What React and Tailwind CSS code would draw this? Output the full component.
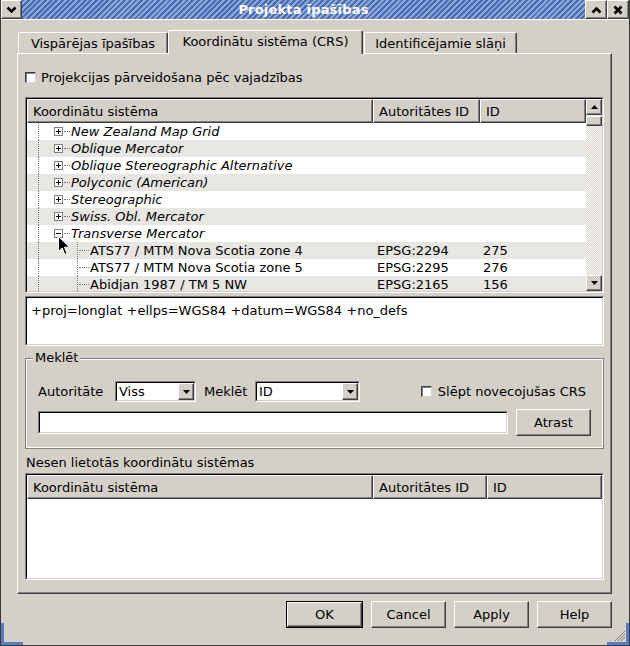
import React from "react";

const raised =
  "border border-t-white border-l-white border-r-[#404040] border-b-[#404040] shadow-[inset_-1px_-1px_0_#808080]";

function Sunken({ className = "", inner = "", children }) {
  return (
    <div className={`border border-t-[#808080] border-l-[#808080] border-r-white border-b-white ${className}`}>
      <div className={`h-full border border-t-black border-l-black border-r-[#d4d0c8] border-b-[#d4d0c8] ${inner}`}>
        {children}
      </div>
    </div>
  );
}

function CheckBox() {
  return (
    <span className="block w-[11px] h-[11px] shrink-0 bg-white border border-t-[#404040] border-l-[#404040] border-r-[#d4d0c8] border-b-[#d4d0c8] shadow-[inset_1px_1px_0_#808080]" />
  );
}

function HeaderCell({ w, children, last }) {
  return (
    <div
      className={`h-full flex items-center pl-[5px] shrink-0 ${raised} ${last ? "flex-1" : ""}`}
      style={w ? { width: w } : undefined}
    >
      {children}
    </div>
  );
}

function Expander({ open }) {
  return (
    <svg width="9" height="9" viewBox="0 0 9 9" className="shrink-0">
      <rect x="0.5" y="0.5" width="8" height="8" fill="white" stroke="#808080" />
      <path d="M2 4.5h5" stroke="#000" />
      {!open && <path d="M4.5 2v5" stroke="#000" />}
    </svg>
  );
}

function Arrow({ dir }) {
  return (
    <svg width="7" height="4" viewBox="0 0 7 4">
      {dir === "up" ? <path d="M0 4L3.5 0L7 4z" fill="#000" /> : <path d="M0 0L3.5 4L7 0z" fill="#000" />}
    </svg>
  );
}

function Combo({ w, value }) {
  return (
    <Sunken className="h-[21px] shrink-0" inner="flex bg-white">
      <div className="flex-1 flex items-center pl-[2px]" style={{ width: w - 20 }}>
        {value}
      </div>
      <div className={`w-[16px] h-full flex items-center justify-center bg-[#d4d0c8] ${raised}`}>
        <Arrow dir="down" />
      </div>
    </Sunken>
  );
}

function Button({ children, w = "w-[75px]" }) {
  return (
    <div className={`${w} h-[27px] flex items-center justify-center ${raised}`}>{children}</div>
  );
}

const groups = [
  "New Zealand Map Grid",
  "Oblique Mercator",
  "Oblique Stereographic Alternative",
  "Polyconic (American)",
  "Stereographic",
  "Swiss. Obl. Mercator",
];

const children = [
  ["ATS77 / MTM Nova Scotia zone 4", "EPSG:2294", "275"],
  ["ATS77 / MTM Nova Scotia zone 5", "EPSG:2295", "276"],
  ["Abidjan 1987 / TM 5 NW", "EPSG:2165", "156"],
];

const dotV = "border-l border-dotted border-[#7a7a7a]";
const dotH = "border-t border-dotted border-[#7a7a7a]";

function GroupRow({ name, open, shade }) {
  return (
    <div className={`flex h-[17px] shrink-0 ${shade ? "bg-[#e8e6e2]" : "bg-white"}`}>
      <div className="w-[346px] flex items-center shrink-0 h-full">
        <div className="w-[11px] shrink-0" />
        <div className={`w-[16px] h-full shrink-0 ${dotV}`} />
        <Expander open={open} />
        <div className={`w-[6px] ml-[1px] shrink-0 ${dotH}`} />
        <span className="ml-[1px] italic whitespace-nowrap">{name}</span>
      </div>
    </div>
  );
}

function ChildRow({ row, shade }) {
  return (
    <div className={`flex h-[17px] shrink-0 ${shade ? "bg-[#e8e6e2]" : "bg-white"}`}>
      <div className="w-[346px] flex items-center shrink-0 h-full">
        <div className="w-[11px] shrink-0" />
        <div className={`w-[39px] h-full shrink-0 ${dotV}`} />
        <div className={`w-[12px] h-full shrink-0 flex items-center ${dotV}`}>
          <div className={`w-[10px] ml-[1px] ${dotH}`} />
        </div>
        <span className="ml-[1px] whitespace-nowrap">{row[0]}</span>
      </div>
      <div className="w-[107px] shrink-0 flex items-center pl-[4px]">{row[1]}</div>
      <div className="w-[107px] shrink-0 flex items-center pl-[3px]">{row[2]}</div>
    </div>
  );
}

export default function App() {
  let i = 0;
  return (
    <div className="relative w-[630px] h-[646px] overflow-hidden bg-[#d4d0c8] font-['DejaVu_Sans',sans-serif] text-[13px] leading-[15px] text-black border-l border-r border-b border-[#3a3a3a]">
      {/* title bar */}
      <div className="flex h-[20px] border-b border-white">
        <div className={`w-[21px] h-full flex items-center justify-center ${raised}`}>
          <svg width="11" height="8" viewBox="0 0 11 8">
            <path d="M1.5 1.5L5.5 5.5L9.5 1.5" fill="none" stroke="#000" strokeWidth="2.6" />
          </svg>
        </div>
        <div className="flex-1 h-full flex items-center justify-center bg-[image:repeating-linear-gradient(135deg,#4a6bb0_0px,#4a6bb0_2px,#8ca7db_2px,#8ca7db_4px)]">
          <span className="font-bold text-white tracking-[0.2px]">Projekta īpašības</span>
        </div>
        <div className={`w-[22px] h-full flex items-center justify-center ${raised}`}>
          <svg width="11" height="8" viewBox="0 0 11 8">
            <path d="M1.5 6.5L5.5 2.5L9.5 6.5" fill="none" stroke="#000" strokeWidth="2.6" />
          </svg>
        </div>
        <div className={`w-[22px] h-full flex items-center justify-center ${raised}`}>
          <svg width="10" height="10" viewBox="0 0 10 10">
            <path d="M1.5 1.5L8.5 8.5M8.5 1.5L1.5 8.5" fill="none" stroke="#000" strokeWidth="2.6" />
          </svg>
        </div>
      </div>

      {/* tabs */}
      <div className="ml-[16px] mt-[10px] flex items-end h-[23px]">
        <div className="ml-[1px] w-[150px] h-[21px] flex items-center justify-center border-t border-l border-white border-r border-r-[#404040] rounded-t-[2px] shadow-[inset_-1px_0_0_#808080]">
          Vispārējas īpašības
        </div>
        <div className="relative z-10 w-[195px] h-[24px] -mb-[1px] pb-[2px] flex items-center justify-center bg-[#d4d0c8] border-t border-l border-white border-r border-r-[#404040] rounded-t-[2px] shadow-[inset_-1px_0_0_#808080]">
          Koordinātu sistēma (CRS)
        </div>
        <div className="ml-[1px] w-[153px] h-[21px] flex items-center justify-center border-t border-l border-white border-r border-r-[#404040] rounded-t-[2px] shadow-[inset_-1px_0_0_#808080]">
          Identificējamie slāņi
        </div>
      </div>

      {/* tab page */}
      <div className={`ml-[16px] w-[595px] h-[541px] px-[7px] ${raised}`}>
        <div className="mt-[15px] h-[17px] flex items-center">
          <CheckBox />
          <span className="ml-[5px]">Projekcijas pārveidošana pēc vajadzības</span>
        </div>

        {/* projection tree */}
        <Sunken className="mt-[11px] h-[196px]" inner="flex bg-white overflow-hidden">
          <div className="flex-1 flex flex-col overflow-hidden">
            <div className="flex h-[24px] shrink-0 bg-[#d4d0c8]">
              <HeaderCell w={346}>Koordinātu sistēma</HeaderCell>
              <HeaderCell w={107}>Autoritātes ID</HeaderCell>
              <HeaderCell last>ID</HeaderCell>
            </div>
            <div className="flex-1 flex flex-col overflow-hidden">
              {groups.map((g) => (
                <GroupRow key={g} name={g} shade={i++ % 2 === 1} />
              ))}
              <GroupRow name="Transverse Mercator" open shade={i++ % 2 === 1} />
              {children.map((c) => (
                <ChildRow key={c[0]} row={c} shade={i++ % 2 === 1} />
              ))}
            </div>
          </div>
          {/* vertical scrollbar */}
          <div className="w-[16px] shrink-0 flex flex-col bg-[image:repeating-conic-gradient(#ffffff_0%_25%,#d4d0c8_0%_50%)] bg-size-[2px_2px]">
            <div className={`h-[16px] flex items-center justify-center bg-[#d4d0c8] ${raised}`}>
              <Arrow dir="up" />
            </div>
            <div className={`h-[10px] mt-[1px] bg-[#d4d0c8] ${raised}`} />
            <div className="flex-1" />
            <div className={`h-[16px] flex items-center justify-center bg-[#d4d0c8] ${raised}`}>
              <Arrow dir="down" />
            </div>
          </div>
        </Sunken>

        {/* proj4 definition */}
        <Sunken className="mt-[3px] h-[50px]" inner="bg-white pl-[4px] pt-[5px]">
          +proj=longlat +ellps=WGS84 +datum=WGS84 +no_defs
        </Sunken>

        {/* search group */}
        <div className="mt-[12px] h-[91px] border border-[#808080]">
          <div className="h-full border border-white flex flex-col">
            <div className="w-fit h-[15px] -mt-[10px] ml-[6px] px-[2px] bg-[#d4d0c8]">Meklēt</div>
            <div className="mt-[16px] h-[21px] flex items-center">
              <span className="ml-[11px] w-[77px]">Autoritāte</span>
              <Combo w={81} value="Viss" />
              <span className="ml-[8px] w-[51px]">Meklēt</span>
              <Combo w={105} value="ID" />
              <div className="ml-auto mr-[16px] flex items-center">
                <CheckBox />
                <span className="ml-[6px]">Slēpt novecojušas CRS</span>
              </div>
            </div>
            <div className="mt-[7px] h-[26px] flex items-center">
              <Sunken className="ml-[11px] w-[470px] h-[23px]" inner="bg-white" />
              <div className="ml-[8px]">
                <Button>Atrast</Button>
              </div>
            </div>
          </div>
        </div>

        <div className="mt-[6px] ml-[1px] h-[15px]">Nesen lietotās koordinātu sistēmas</div>

        {/* recently used */}
        <Sunken className="mt-[3px] h-[107px]" inner="bg-white flex flex-col">
          <div className="flex h-[24px] shrink-0 bg-[#d4d0c8]">
            <HeaderCell w={346}>Koordinātu sistēma</HeaderCell>
            <HeaderCell w={114}>Autoritātes ID</HeaderCell>
            <HeaderCell last>ID</HeaderCell>
          </div>
        </Sunken>
      </div>

      {/* dialog buttons */}
      <div className="mt-[7px] w-[611px] flex justify-end gap-[8px]">
        <div className="w-[77px] h-[27px] border border-black">
          <div className={`h-full flex items-center justify-center ${raised}`}>OK</div>
        </div>
        <Button>Cancel</Button>
        <Button>Apply</Button>
        <Button>Help</Button>
      </div>

      {/* window frame corners */}
      <div className="absolute left-0 bottom-0 w-[22px] h-[3px] bg-[#5b7cc0]" />
      <div className="absolute left-0 bottom-0 w-[3px] h-[22px] bg-[#5b7cc0]" />
      <div className="absolute right-0 bottom-0 w-[22px] h-[3px] bg-[#5b7cc0]" />
      <div className="absolute right-0 bottom-0 w-[3px] h-[22px] bg-[#5b7cc0]" />
      <svg className="absolute right-[3px] bottom-[3px]" width="12" height="12" viewBox="0 0 12 12">
        <path d="M11 1L1 11M11 4L4 11M11 7L7 11" stroke="#808080" />
      </svg>

      {/* mouse pointer */}
      <svg className="absolute left-[57px] top-[236px]" width="13" height="20" viewBox="0 0 13 20">
        <path d="M0.5 0.5V15.5L4.2 12L6.8 18.5L9 17.5L6.5 11.2H11.5Z" fill="#000" stroke="#fff" strokeWidth="1" />
      </svg>
    </div>
  );
}
